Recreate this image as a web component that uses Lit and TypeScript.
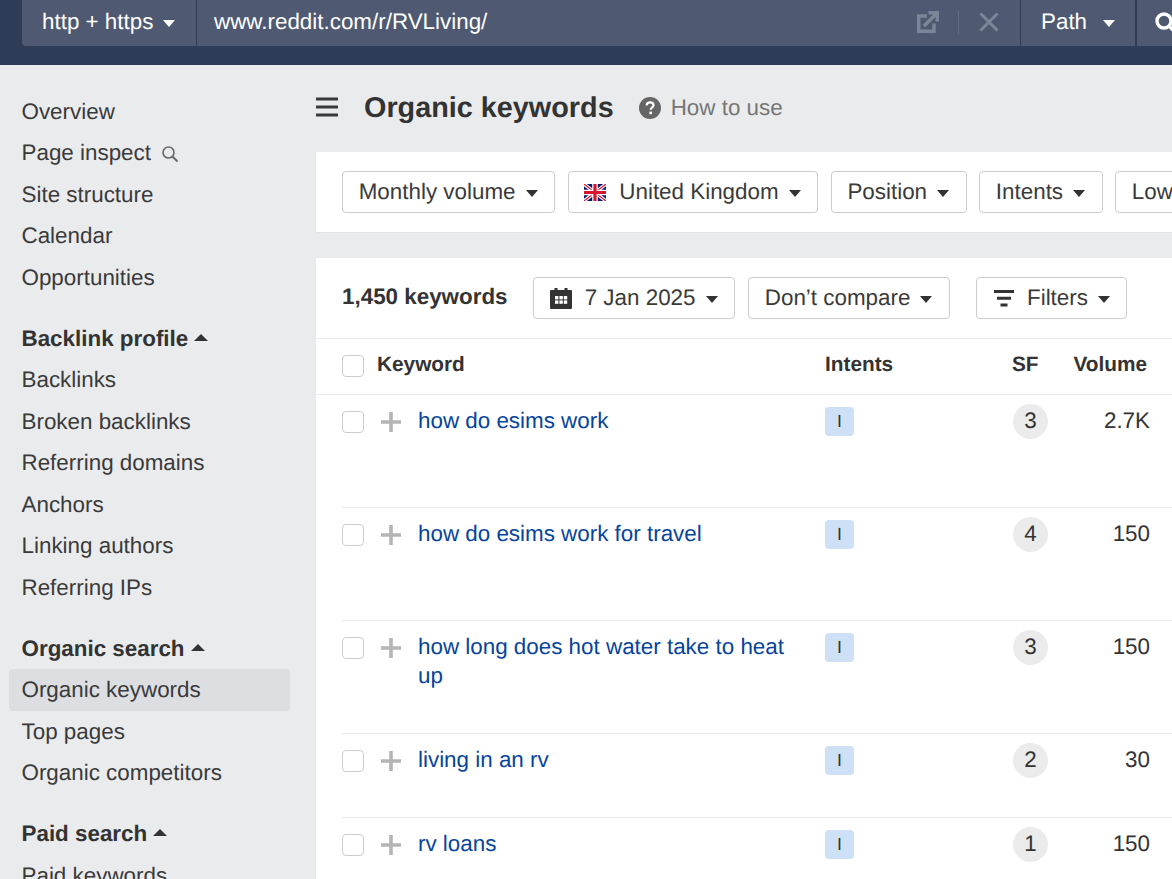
import { LitElement, html, css } from "lit";
import { customElement } from "lit/decorators.js";

const caret = html`<span class="caret"></span>`;

const flag = html`<svg class="flag" viewBox="0 0 22 17" width="22" height="17">
  <rect width="22" height="17" fill="#0a1a6b"/>
  <path d="M0 0L22 17M22 0L0 17" stroke="#fff" stroke-width="3.4"/>
  <path d="M0 0L22 17M22 0L0 17" stroke="#d8152f" stroke-width="1.2"/>
  <path d="M11 0V17M0 8.5H22" stroke="#fff" stroke-width="5.6"/>
  <path d="M11 0V17M0 8.5H22" stroke="#d8152f" stroke-width="3.2"/>
</svg>`;

const calendar = html`<svg class="ico" viewBox="0 0 22 21" width="22" height="21">
  <path fill="#333" d="M0 3Q0 2 1 2H4.5V0H7.5V2H14.5V0H17.5V2H21Q22 2 22 3V20Q22 21 21 21H1Q0 21 0 20Z"/>
  <g fill="#fff">
    <rect x="5" y="8" width="3.4" height="3.4"/><rect x="9.4" y="8" width="3.4" height="3.4"/><rect x="13.8" y="8" width="3.4" height="3.4"/>
    <rect x="5" y="12.4" width="3.4" height="3.4"/><rect x="9.4" y="12.4" width="3.4" height="3.4"/><rect x="13.8" y="12.4" width="3.4" height="3.4"/>
  </g>
</svg>`;

const filterIcon = html`<svg class="ico" viewBox="0 0 20 17" width="20" height="17">
  <path fill="#333" d="M0 0H20V3H0ZM3 6.7H17V9.7H3ZM6.5 13.5H13.5V16.5H6.5Z"/>
</svg>`;

const plus = html`<svg class="plus" viewBox="0 0 20 20" width="20" height="20">
  <path fill="#b5b5b5" d="M8.2 0H11.8V8.2H20V11.8H11.8V20H8.2V11.8H0V8.2H8.2Z"/>
</svg>`;

const nav: Array<{ title?: string; items: string[] }> = [
  { items: ["Overview", "Page inspect", "Site structure", "Calendar", "Opportunities"] },
  { title: "Backlink profile", items: ["Backlinks", "Broken backlinks", "Referring domains", "Anchors", "Linking authors", "Referring IPs"] },
  { title: "Organic search", items: ["Organic keywords", "Top pages", "Organic competitors"] },
  { title: "Paid search", items: ["Paid keywords"] },
];

const rows = [
  { kw: "how do esims work", sf: "3", vol: "2.7K", cls: "" },
  { kw: "how do esims work for travel", sf: "4", vol: "150", cls: "" },
  { kw: "how long does hot water take to heat up", sf: "3", vol: "150", cls: "" },
  { kw: "living in an rv", sf: "2", vol: "30", cls: "short" },
  { kw: "rv loans", sf: "1", vol: "150", cls: "short" },
];

@customElement("app-root")
export class AppRoot extends LitElement {
  static styles = css`
    :host {
      display: block;
      width: 1172px;
      height: 879px;
      overflow: hidden;
      background: #eaebed;
      color: #333;
      font-family: "Liberation Sans", Arial, sans-serif;
      font-size: 22.4px;
      text-rendering: geometricPrecision;
    }
    .top {
      height: 65px;
      background: #2e3c57;
      padding: 0 0 19px 22px;
      box-sizing: border-box;
      display: flex;
      overflow: hidden;
    }
    .bar {
      flex: none;
      width: 1180px;
      display: flex;
      background: #4f5a72;
      border-radius: 0 0 4px 4px;
      color: #fff;
    }
    .seg {
      display: flex;
      align-items: center;
      box-sizing: border-box;
      border-right: 1px solid #2e3c57;
      flex: none;
      padding-bottom: 2px;
    }
    .seg .caret { border-top-color: #fff; }
    .proto { width: 175px; padding-left: 20px; gap: 10px; }
    .url { width: 824px; padding-left: 17px; padding-right: 21px; }
    .url span { flex: 1; }
    .url .vr { flex: none; width: 1px; height: 23px; background: #646e84; margin: 0 20px 0 19px; }
    .path { width: 116px; padding-left: 20px; gap: 16px; border-right-width: 2px; }
    .go { padding-left: 18px; }
    .go svg { display: block; margin-top: 12px; }

    .body { display: flex; height: 814px; }
    .side {
      flex: none;
      width: 316px;
      box-sizing: border-box;
      padding: 25.5px 26px 0 9px;
      line-height: 41.5px;
    }
    .group + .group { margin-top: 19.5px; }
    .group h4 {
      margin: 0;
      font: inherit;
      font-weight: 700;
      padding-left: 12.5px;
      display: flex;
      align-items: center;
      gap: 6px;
    }
    .item {
      padding-left: 12.5px;
      border-radius: 4px;
      color: #3a3a3a;
      display: flex;
      align-items: center;
      gap: 11px;
    }
    .item.active { background: #dcdee2; }
    .item svg { margin-top: 3px; }
    .up {
      width: 0;
      height: 0;
      border-left: 7px solid transparent;
      border-right: 7px solid transparent;
      border-bottom: 7px solid #333;
      margin-top: -2px;
    }

    .main { flex: 1; min-width: 0; overflow: hidden; }
    .head {
      height: 87px;
      display: flex;
      align-items: center;
    }
    .burger { flex: none; margin-right: 26px; margin-top: -4px; }
    h1 {
      margin: 0;
      font-size: 28.8px;
      font-weight: 700;
      color: #333;
      margin-right: 25px;
    }
    .help { display: flex; align-items: center; gap: 10px; color: #767676; margin-top: -1px; }
    .card { background: #fff; }
    .filters {
      box-sizing: border-box;
      padding: 19px 0 0 26px;
      display: flex;
      gap: 12.5px;
      border-bottom: 1px solid #e3e4e6;
      height: 81px;
    }
    .btn {
      flex: none;
      box-sizing: border-box;
      height: 42px;
      padding: 0 16.6px 0 15.7px;
      display: flex;
      align-items: center;
      gap: 10px;
      border: 1px solid #ccc;
      border-radius: 4px;
      background: #fff;
      white-space: nowrap;
      color: #3a3a3a;
    }
    .caret {
      flex: none;
      width: 0;
      height: 0;
      border-left: 6.5px solid transparent;
      border-right: 6.5px solid transparent;
      border-top: 7.5px solid #333;
      margin-top: 2px;
    }
    .flag, .ico { flex: none; }
    .btn .flag, .btn .ico { margin-right: 3px; }
    .table { margin-top: 25px; }
    .tools {
      height: 81px;
      box-sizing: border-box;
      padding: 19px 0 0 26px;
      display: flex;
      border-bottom: 1px solid #eaebed;
    }
    .count { font-weight: 700; line-height: 40px; width: 191px; flex: none; }
    .tools .btn + .btn { margin-left: 13px; }
    .tools .btn.filter { margin-left: 26px; padding-left: 17px; padding-right: 16px; }
    .btn.filter .ico { margin-right: 3px; }
    .thead {
      height: 56px;
      box-sizing: border-box;
      padding: 0 25px 3px 26px;
      display: grid;
      grid-template-columns: 35px 448px 187px 1fr;
      align-items: center;
      font-weight: 700;
      font-size: 20.8px;
      border-bottom: 1px solid #eaebed;
    }
    .check {
      width: 22px;
      height: 22px;
      box-sizing: border-box;
      border: 1px solid #ccc;
      border-radius: 4px;
      background: #fff;
    }
    .thead .check { margin-top: 1px; }
    .cols { display: flex; justify-content: space-between; }
    .row {
      margin-left: 26px;
      height: 113px;
      box-sizing: border-box;
      padding: 9px 22px 0 0;
      display: grid;
      grid-template-columns: 39px 37px 407px 187px 1fr;
      align-items: start;
      border-bottom: 1px solid #eaebed;
    }
    .row.short { height: 84px; }
    .row .check { margin-top: 7px; }
    .plus { margin-top: 8px; display: block; }
    .kw { color: #07449c; line-height: 29px; padding-right: 24px; margin-top: 2px; }
    .badge {
      width: 29px;
      height: 29px;
      margin-top: 3px;
      border-radius: 4px;
      background: #cde0f6;
      display: flex;
      align-items: center;
      justify-content: center;
      font-size: 17.6px;
      color: #333;
    }
    .sfvol { display: flex; justify-content: space-between; }
    .sf {
      width: 35px;
      height: 35px;
      box-sizing: border-box;
      padding-bottom: 1px;
      border-radius: 50%;
      background: #ebebeb;
      display: flex;
      align-items: center;
      justify-content: center;
      margin-left: 1px;
    }
    .vol { line-height: 29px; margin-top: 2px; }
  `;

  render() {
    return html`
      <div class="top">
        <div class="bar">
          <div class="seg proto">http + https ${caret}</div>
          <div class="seg url">
            <span>www.reddit.com/r/RVLiving/</span>
            <svg viewBox="0 0 22 22" width="22" height="22" fill="none" stroke="#7d8698" stroke-width="3.4">
              <path d="M10 5H1.7V20.3H17V12.5"/>
              <path d="M7 15L19 3M11.5 1.7H20.3V10.5"/>
            </svg>
            <i class="vr"></i>
            <svg viewBox="0 0 20 20" width="20" height="20" fill="none" stroke="#7d8698" stroke-width="3">
              <path d="M1.5 1.5L18.5 18.5M18.5 1.5L1.5 18.5"/>
            </svg>
          </div>
          <div class="seg path">Path ${caret}</div>
          <div class="go">
            <svg viewBox="0 0 22 22" width="22" height="22" fill="none" stroke="#fff" stroke-width="3.4">
              <circle cx="9" cy="9" r="7"/><path d="M14 14L21 21"/>
            </svg>
          </div>
        </div>
      </div>
      <div class="body">
        <nav class="side">
          ${nav.map(
            (g) => html`<div class="group">
              ${g.title ? html`<h4>${g.title}<span class="up"></span></h4>` : ""}
              ${g.items.map(
                (i) => html`<div class="item ${i === "Organic keywords" ? "active" : ""}">
                  ${i}
                  ${i === "Page inspect"
                    ? html`<svg viewBox="0 0 16 16" width="16" height="16" fill="none" stroke="#6a6a6a" stroke-width="1.6">
                        <circle cx="6.5" cy="6.5" r="5.5"/><path d="M10.5 10.5L15.5 15.5" stroke-width="2"/>
                      </svg>`
                    : ""}
                </div>`
              )}
            </div>`
          )}
        </nav>
        <main class="main">
          <div class="head">
            <svg class="burger" viewBox="0 0 22 20" width="22" height="20">
              <path fill="#3a3a3a" d="M0 .4H22V3.6H0ZM0 8.4H22V11.6H0ZM0 16.4H22V19.6H0Z"/>
            </svg>
            <h1>Organic keywords</h1>
            <div class="help">
              <svg viewBox="0 0 22 22" width="22" height="22">
                <circle cx="11" cy="11" r="11" fill="#666"/>
                <path d="M7.6 8.4C7.8 6.4 9.2 5.3 11.1 5.3C13.1 5.3 14.5 6.5 14.5 8.2C14.5 10.4 11.7 10.6 11.7 12.8" fill="none" stroke="#fff" stroke-width="2.2"/>
                <rect x="10.4" y="14.6" width="2.6" height="2.6" fill="#fff"/>
              </svg>
              How to use
            </div>
          </div>
          <div class="card filters">
            <div class="btn">Monthly volume ${caret}</div>
            <div class="btn">${flag} United Kingdom ${caret}</div>
            <div class="btn">Position ${caret}</div>
            <div class="btn">Intents ${caret}</div>
            <div class="btn">Low</div>
          </div>
          <div class="card table">
            <div class="tools">
              <div class="count">1,450 keywords</div>
              <div class="btn">${calendar} 7 Jan 2025 ${caret}</div>
              <div class="btn">Don’t compare ${caret}</div>
              <div class="btn filter">${filterIcon} Filters ${caret}</div>
            </div>
            <div class="thead">
              <div class="check"></div>
              <div>Keyword</div>
              <div>Intents</div>
              <div class="cols"><span>SF</span><span>Volume</span></div>
            </div>
            ${rows.map(
              (r) => html`<div class="row ${r.cls}">
                <div class="check"></div>
                ${plus}
                <div class="kw">${r.kw}</div>
                <div class="badge">I</div>
                <div class="sfvol"><div class="sf">${r.sf}</div><div class="vol">${r.vol}</div></div>
              </div>`
            )}
          </div>
        </main>
      </div>
    `;
  }
}
